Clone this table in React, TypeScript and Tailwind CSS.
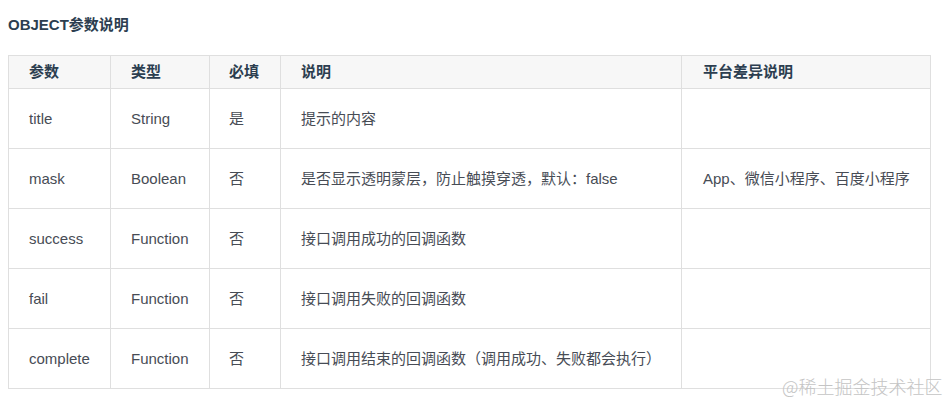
const rows = [
  { name: "title", type: "String", required: "是", desc: "提示的内容", platform: "" },
  {
    name: "mask",
    type: "Boolean",
    required: "否",
    desc: "是否显示透明蒙层，防止触摸穿透，默认：false",
    platform: "App、微信小程序、百度小程序",
  },
  { name: "success", type: "Function", required: "否", desc: "接口调用成功的回调函数", platform: "" },
  { name: "fail", type: "Function", required: "否", desc: "接口调用失败的回调函数", platform: "" },
  {
    name: "complete",
    type: "Function",
    required: "否",
    desc: "接口调用结束的回调函数（调用成功、失败都会执行）",
    platform: "",
  },
];

export default function App() {
  return (
    <div className="relative w-[948px] h-[404px] bg-white overflow-hidden font-['Liberation_Sans','Noto_Sans_CJK_SC',sans-serif] text-[#474c55]">
      <div className="pl-[8px] pt-[15px]">
        <h3 className="text-[15px] font-bold leading-[20px] text-[#2c3e50]">OBJECT参数说明</h3>

        <table className="mt-[20px] w-[922px] table-fixed border-collapse text-[15px] leading-[22px]">
          <colgroup>
            <col className="w-[102px]" />
            <col className="w-[99px]" />
            <col className="w-[71px]" />
            <col className="w-[401px]" />
            <col className="w-[249px]" />
          </colgroup>
          <thead>
            <tr className="bg-[#f7f7f7] h-[33px] text-[#2c3e50]">
              <th className="border border-[#dfdfdf] px-[20px] text-left font-bold">参数</th>
              <th className="border border-[#dfdfdf] px-[20px] text-left font-bold">类型</th>
              <th className="border border-[#dfdfdf] px-[19px] text-left font-bold">必填</th>
              <th className="border border-[#dfdfdf] px-[20px] text-left font-bold">说明</th>
              <th className="border border-[#dfdfdf] pl-[21px] pr-[8px] text-left font-bold">平台差异说明</th>
            </tr>
          </thead>
          <tbody>
            {rows.map((r) => (
              <tr key={r.name} className="h-[60px]">
                <td className="border border-[#dfdfdf] px-[20px] pt-[1px]">{r.name}</td>
                <td className="border border-[#dfdfdf] px-[20px] pt-[1px]">{r.type}</td>
                <td className="border border-[#dfdfdf] px-[19px] pt-[1px]">{r.required}</td>
                <td className="border border-[#dfdfdf] px-[20px] pt-[1px]">{r.desc}</td>
                <td className="border border-[#dfdfdf] pl-[21px] pr-[8px] pt-[1px] whitespace-nowrap">{r.platform}</td>
              </tr>
            ))}
          </tbody>
        </table>
      </div>

      {/* watermark */}
      <div className="absolute left-[782px] top-[373px] text-[18px] leading-[26px] text-[#c4c4c4] font-['Noto_Sans_CJK_SC',sans-serif] font-light">
        @稀土掘金技术社区
      </div>
    </div>
  );
}
